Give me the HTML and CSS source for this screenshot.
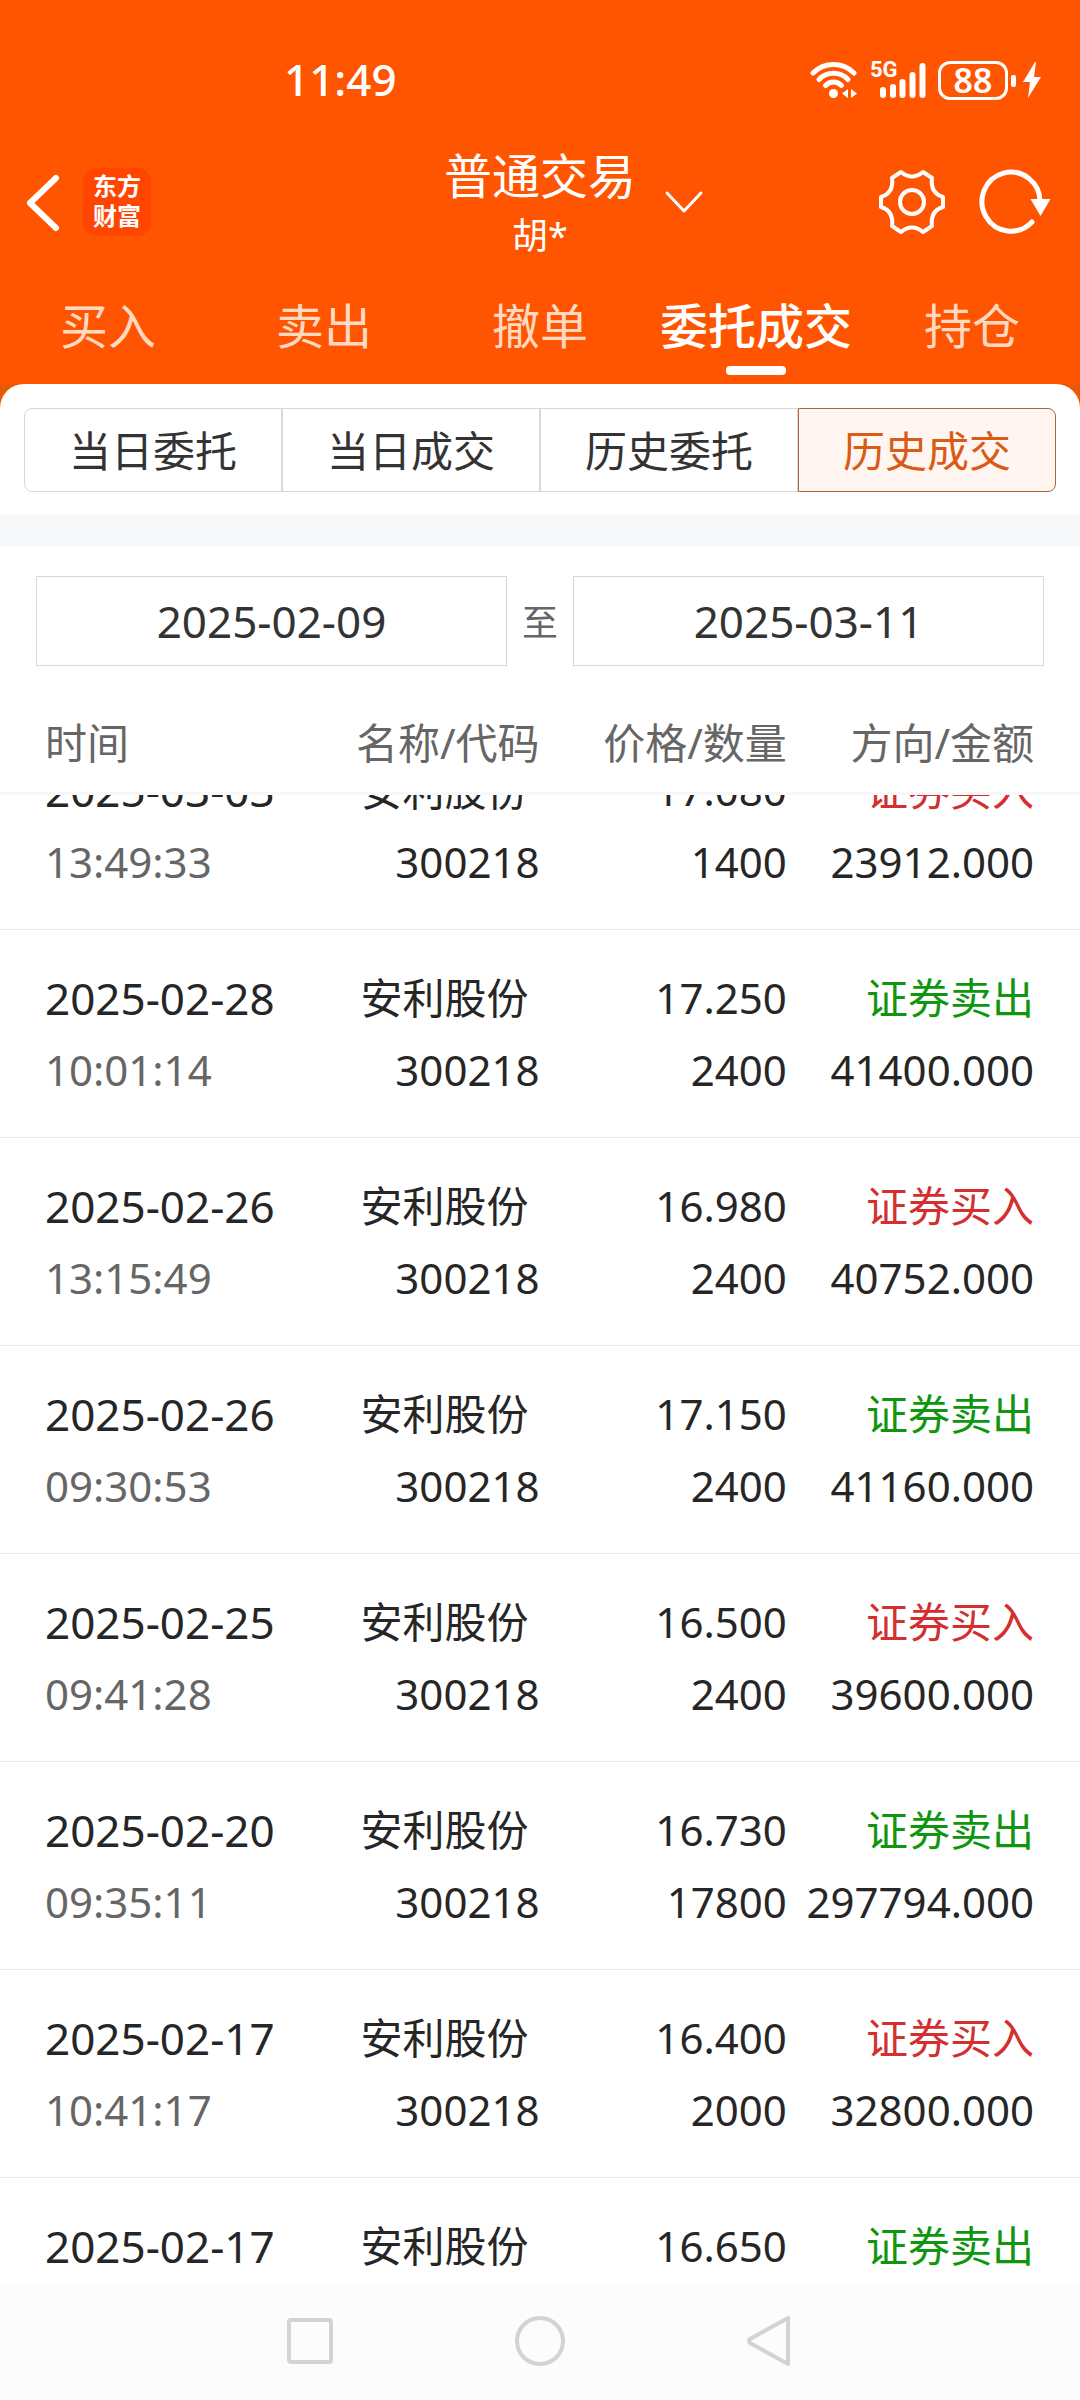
FILE: index.html
```html
<!DOCTYPE html>
<html lang="zh-CN">
<head>
    <meta charset="UTF-8">
    <meta name="viewport" content="width=device-width, initial-scale=1.0">
    <title>普通交易</title>
    <link rel="stylesheet" href="styles.css">
</head>
<body>
    <header>
        <div class="status-bar">
            <span class="clock">11:49</span>
            <div class="status-icons">
                <svg width="48" height="38" viewBox="0 0 48 38" fill="none" stroke="currentColor" stroke-width="5" stroke-linecap="round">
                    <path d="M3 12a29 29 0 0 1 41 0"/>
                    <path d="M9 18.500a20 20 0 0 1 29 0"/>
                    <path d="M15.500 24.500a11 11 0 0 1 16 0"/>
                    <circle cx="23.500" cy="32.500" r="4.500" fill="currentColor" stroke="none"/>
                    <path d="M38 28v9l-6-4.500zM41 28v9l6-4.500z" fill="currentColor" stroke="none"/>
                </svg>
                <div class="signal">
                    <span class="network">5G</span>
                    <svg width="48" height="38" viewBox="0 0 48 38" fill="none" stroke="currentColor" stroke-width="6" stroke-linecap="round">
                        <path d="M5 29v5M15 26v8M24.500 21v13M34.500 14v20M44.500 5v29"/>
                    </svg>
                </div>
                <div class="battery">88</div>
                <svg class="bolt" width="20" height="38" viewBox="0 0 20 38" fill="currentColor">
                    <path d="M13 1 1 21h7L6 37l13-21h-7l2-15z"/>
                </svg>
            </div>
        </div>
        <div class="title-bar">
            <div class="title-left">
                <button class="icon-button" aria-label="返回">
                    <svg width="39" height="60" viewBox="0 0 39 60" fill="none" stroke="currentColor" stroke-width="6" stroke-linecap="round" stroke-linejoin="round"><path d="M32 6 6 31l26 25"/></svg>
                </button>
                <a href="#" class="logo">东方<br>财富</a>
            </div>
            <div class="account">
                <h1>普通交易</h1>
                <p>胡*</p>
            </div>
            <div class="title-right">
                <button class="icon-button" aria-label="切换账户">
                    <svg width="40" height="24" viewBox="0 0 40 24" fill="none" stroke="currentColor" stroke-width="3" stroke-linecap="round" stroke-linejoin="round"><path d="m3 3 17 18L37 3"/></svg>
                </button>
                <button class="icon-button settings" aria-label="设置">
                    <svg width="68" height="66" viewBox="0 0 68 66" fill="none" stroke="currentColor" stroke-width="4" stroke-linejoin="round"><path d="M23 3Q34 12 45 3L54 9Q52 24 65 28V38Q52 42 54 57L45 63Q34 54 23 63L14 57Q16 42 3 38V28Q16 24 14 9Z"/><circle cx="34" cy="33" r="12"/></svg>
                </button>
                <button class="icon-button" aria-label="刷新">
                    <svg width="74" height="66" viewBox="0 0 74 66" fill="none" stroke="currentColor" stroke-width="5" stroke-linecap="round"><path d="M62 33A29 29.500 0 1 0 54 53"/><path d="M52.500 30h20l-10 17z" fill="currentColor" stroke="none"/></svg>
                </button>
            </div>
        </div>
        <nav class="tabs">
            <a href="#">买入</a>
            <a href="#">卖出</a>
            <a href="#">撤单</a>
            <a href="#" class="active">委托成交</a>
            <a href="#">持仓</a>
        </nav>
    </header>
    <main>
        <div class="segments">
            <button>当日委托</button>
            <button>当日成交</button>
            <button>历史委托</button>
            <button class="active">历史成交</button>
        </div>
        <div class="date-range">
            <input type="text" aria-label="开始日期" value="2025-02-09" readonly>
            <span>至</span>
            <input type="text" aria-label="结束日期" value="2025-03-11" readonly>
        </div>
        <div class="scroller" id="scroller">
            <table>
                <thead>
                    <tr><th>时间</th><th>名称/代码</th><th>价格/数量</th><th>方向/金额</th></tr>
                </thead>
                <tbody>
                    <tr>
                        <td><span class="date">2025-03-03</span><span class="time">13:49:33</span></td>
                        <td><span>安利股份&nbsp;</span><span>300218</span></td>
                        <td><span>17.080</span><span>1400</span></td>
                        <td><span class="buy">证券买入</span><span>23912.000</span></td>
                    </tr>
                    <tr>
                        <td><span class="date">2025-02-28</span><span class="time">10:01:14</span></td>
                        <td><span>安利股份&nbsp;</span><span>300218</span></td>
                        <td><span>17.250</span><span>2400</span></td>
                        <td><span class="sell">证券卖出</span><span>41400.000</span></td>
                    </tr>
                    <tr>
                        <td><span class="date">2025-02-26</span><span class="time">13:15:49</span></td>
                        <td><span>安利股份&nbsp;</span><span>300218</span></td>
                        <td><span>16.980</span><span>2400</span></td>
                        <td><span class="buy">证券买入</span><span>40752.000</span></td>
                    </tr>
                    <tr>
                        <td><span class="date">2025-02-26</span><span class="time">09:30:53</span></td>
                        <td><span>安利股份&nbsp;</span><span>300218</span></td>
                        <td><span>17.150</span><span>2400</span></td>
                        <td><span class="sell">证券卖出</span><span>41160.000</span></td>
                    </tr>
                    <tr>
                        <td><span class="date">2025-02-25</span><span class="time">09:41:28</span></td>
                        <td><span>安利股份&nbsp;</span><span>300218</span></td>
                        <td><span>16.500</span><span>2400</span></td>
                        <td><span class="buy">证券买入</span><span>39600.000</span></td>
                    </tr>
                    <tr>
                        <td><span class="date">2025-02-20</span><span class="time">09:35:11</span></td>
                        <td><span>安利股份&nbsp;</span><span>300218</span></td>
                        <td><span>16.730</span><span>17800</span></td>
                        <td><span class="sell">证券卖出</span><span>297794.000</span></td>
                    </tr>
                    <tr>
                        <td><span class="date">2025-02-17</span><span class="time">10:41:17</span></td>
                        <td><span>安利股份&nbsp;</span><span>300218</span></td>
                        <td><span>16.400</span><span>2000</span></td>
                        <td><span class="buy">证券买入</span><span>32800.000</span></td>
                    </tr>
                    <tr>
                        <td><span class="date">2025-02-17</span></td>
                        <td><span>安利股份&nbsp;</span></td>
                        <td><span>16.650</span></td>
                        <td><span class="sell">证券卖出</span></td>
                    </tr>
                </tbody>
            </table>
        </div>
    </main>
    <footer>
        <button class="icon-button" aria-label="最近任务">
            <svg width="52" height="52" viewBox="0 0 52 52" fill="none" stroke="currentColor" stroke-width="4"><rect x="5" y="5" width="42" height="42" rx="2"/></svg>
        </button>
        <button class="icon-button" aria-label="主页">
            <svg width="52" height="52" viewBox="0 0 52 52" fill="none" stroke="currentColor" stroke-width="4"><circle cx="26" cy="26" r="23"/></svg>
        </button>
        <button class="icon-button" aria-label="返回上一级">
            <svg width="52" height="52" viewBox="0 0 52 52" fill="none" stroke="currentColor" stroke-width="4" stroke-linejoin="round"><path d="M44 3v46L6 28q-2-2 0-4z"/></svg>
        </button>
    </footer>

    <script>
        // the list opens part way down its first row
        document.getElementById('scroller').scrollTop = 73;
    </script>
</body>
</html>
```
FILE: styles.css
```css
* {
    box-sizing: border-box;
}
body {
    font-family: 'Noto Sans', 'Noto Sans CJK SC', sans-serif;
    font-size: 42px;
    margin: 0;
    height: 100vh;
    display: flex;
    flex-direction: column;
    background-color: #e85806;
    color: #262626;
}
h1, p {
    margin: 0;
    font-weight: normal;
}
a {
    color: inherit;
    text-decoration: none;
}
button, input {
    font: inherit;
    color: inherit;
    margin: 0;
    padding: 0;
}
svg {
    display: block;
}
.icon-button {
    border: none;
    background: none;
}

/* header */
header {
    background-color: #ff5500;
    color: #fff;
}
.status-bar {
    display: flex;
    align-items: center;
    justify-content: space-between;
    padding: 44px 38px 22px 284px;
    height: 138px;
}
.clock {
    padding-bottom: 2px;
    font-size: 44px;
    font-weight: 500;
}
.status-icons {
    display: flex;
    align-items: center;
    gap: 12px;
}
.signal {
    position: relative;
    padding-left: 8px;
}
.network {
    position: absolute;
    left: 0;
    top: -3px;
    font-size: 22px;
    line-height: 24px;
    font-family: Roboto, sans-serif;
    font-weight: bold;
}
.battery {
    position: relative;
    width: 70px;
    height: 39px;
    border: 3px solid #fff;
    border-radius: 12px;
    font-size: 34px;
    font-weight: 600;
    line-height: 32px;
    text-align: center;
}
.battery::after {
    content: '';
    position: absolute;
    right: -11px;
    top: 11px;
    width: 5px;
    height: 12px;
    border-radius: 2px;
    background-color: #fff;
}
.bolt {
    margin-left: 2px;
}
.title-bar {
    display: grid;
    grid-template-columns: 1fr auto 1fr;
    align-items: center;
    height: 128px;
}
.title-left {
    display: flex;
    align-items: center;
    gap: 20px;
    padding-left: 24px;
}
.logo {
    width: 68px;
    height: 68px;
    padding-top: 3px;
    border-radius: 14px;
    background-color: #ff4500;
    font-size: 24px;
    font-weight: bold;
    line-height: 30px;
    text-align: center;
}
.account {
    padding-top: 8px;
    text-align: center;
    line-height: 60px;
}
.account h1 {
    font-size: 48px;
}
.account p {
    font-size: 36px;
}
.title-right {
    display: flex;
    align-items: center;
    gap: 32px;
    padding: 0 28px;
}
.settings {
    margin-left: auto;
}
.tabs {
    display: flex;
    height: 118px;
    padding-top: 4px;
}
.tabs a {
    flex: 1;
    position: relative;
    font-size: 48px;
    line-height: 112px;
    text-align: center;
    white-space: nowrap;
    color: #ffd9c2;
}
.tabs a.active {
    color: #fff;
    font-weight: 500;
}
.tabs a.active::after {
    content: '';
    position: absolute;
    left: 50%;
    bottom: 9px;
    width: 60px;
    height: 9px;
    margin-left: -30px;
    border-radius: 4px;
    background-color: #fff;
}

/* content sheet */
main {
    flex: 1;
    min-height: 0;
    display: flex;
    flex-direction: column;
    background-color: #fff;
    border-radius: 24px 24px 0 0;
}
.segments {
    display: flex;
    padding: 24px 24px 23px;
    color: #333;
}
.segments button {
    flex: 1;
    height: 84px;
    padding-bottom: 4px;
    border: 1px solid #d6d8d9;
    background-color: #fff;
}
.segments button:first-child {
    border-radius: 8px 0 0 8px;
}
.segments button:last-child {
    border-radius: 0 8px 8px 0;
}
.segments button.active {
    border-color: #a8673c;
    background-color: #fff6f2;
    color: #d95b17;
}
.date-range {
    display: flex;
    align-items: center;
    border-top: 31px solid #f6f8fa;
    padding: 30px 36px 26px;
    color: #333;
}
.date-range input {
    flex: 1;
    min-width: 0;
    height: 90px;
    border: 1px solid #d6d8d9;
    background-color: #fff;
    font-size: 44px;
    text-align: center;
}
.date-range span {
    width: 66px;
    padding-bottom: 2px;
    font-size: 36px;
    text-align: center;
    color: #666;
}

/* trade list */
.scroller {
    flex: 1;
    min-height: 0;
    overflow-y: auto;
    scrollbar-width: none;
}
table, thead, tbody {
    display: block;
}
thead {
    position: sticky;
    top: 0;
    padding-top: 2px;
    background-color: #fff;
    border-bottom: 3px solid #f6f8fa;
    line-height: 98px;
    color: #666;
}
thead tr {
    height: 98px;
}
tr {
    display: grid;
    grid-template-columns: repeat(4, 1fr);
    padding: 0 46px 0 45px;
}
tbody tr {
    padding-top: 32px;
    padding-bottom: 31px;
    border-bottom: 1px solid #ebeced;
}
th, td {
    padding: 0;
    font-weight: normal;
    text-align: right;
    white-space: nowrap;
}
th:first-child, td:first-child {
    text-align: left;
}
td {
    display: flex;
    flex-direction: column;
}
td:last-child {
    align-items: flex-end;
}
td span {
    height: 72px;
    line-height: 72px;
}
.date {
    font-size: 44px;
}
.time {
    color: #666;
}
.buy {
    color: #d32f2f;
}
.sell {
    color: #0f960f;
}

/* system navigation */
footer {
    display: flex;
    align-items: center;
    justify-content: center;
    gap: 178px;
    height: 118px;
    background-color: #fcfcfc;
    color: #d3d3d3;
}
```
